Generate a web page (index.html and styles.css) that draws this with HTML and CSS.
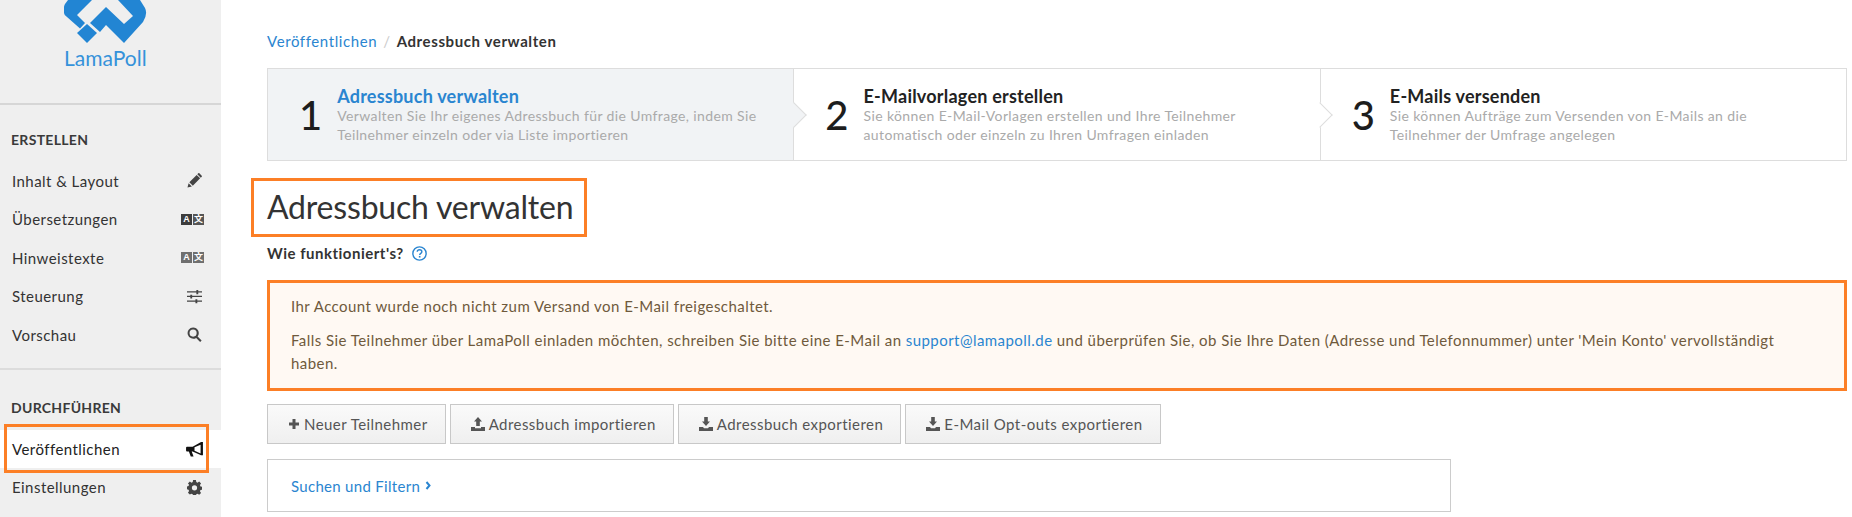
FILE: index.html
```html
<!DOCTYPE html>
<html lang="de">
<head>
<meta charset="utf-8">
<title>Adressbuch verwalten</title>
<link rel="stylesheet" href="styles.css">
</head>
<body>
<aside class="sidebar">
  <div class="brand">
    <svg class="logo" viewBox="0 0 83 43" width="83" height="43" aria-hidden="true">
      <path fill="#2285d3" d="M4 0 L1 4 Q-1 8 0 13 Q0 15 3 17 L16 28.500 L21 23 L13 15 L28 0 Z"/>
      <path fill="#2285d3" d="M13 33 L23 24 L33 33 L23 43 Z"/>
      <path fill="#2285d3" d="M42 7 L26 23 L36 32 L42 25 L60 43 L79 22 Q84 14 81 8 L76 0 L54 0 L69 16 L60 24 Z"/>
    </svg>
    <div class="brand-name">LamaPoll</div>
  </div>
  <nav class="nav-group first">
    <h2 class="nav-title">ERSTELLEN</h2>
    <a class="nav-item">Inhalt &amp; Layout
      <svg class="nav-icon" viewBox="0 0 16 16" aria-hidden="true"><path d="M.5 15.500l1.200-4.700 3.500 3.500zM2.500 9.800l7.800-7.800 3.700 3.700-7.800 7.800zM11 1.300l1-1q.6-.5 1.200 0l2.500 2.500q.5.600 0 1.200l-1 1z"/></svg>
    </a>
    <a class="nav-item">Übersetzungen
      <span class="tr-icon"><span class="tr-box">A</span><span class="tr-box">文</span></span>
    </a>
    <a class="nav-item">Hinweistexte
      <span class="tr-icon muted"><span class="tr-box">A</span><span class="tr-box">文</span></span>
    </a>
    <a class="nav-item">Steuerung
      <svg class="nav-icon" viewBox="0 0 16 16" aria-hidden="true"><path d="M0 2.500h16v1.300H0zM0 7.300h16v1.300H0zM0 12.200h16v1.300H0z"/><path d="M10 1h2v4.500h-2zM3.500 6h2v4.200h-2zM9 10.800h2v4.400H9z"/></svg>
    </a>
    <a class="nav-item">Vorschau
      <svg class="nav-icon" viewBox="0 0 16 16" aria-hidden="true"><path fill-rule="evenodd" d="M6.500.5a6 6 0 0 1 4.800 9.600l4.300 4.200-1.600 1.600-4.200-4.300A6 6 0 1 1 6.500.5zm0 2.200a3.800 3.800 0 1 0 0 7.600 3.800 3.800 0 0 0 0-7.600z"/></svg>
    </a>
  </nav>
  <nav class="nav-group second">
    <h2 class="nav-title">DURCHFÜHREN</h2>
    <a class="nav-item active">Veröffentlichen
      <svg class="nav-icon big" viewBox="0 0 18 16" aria-hidden="true"><path fill-rule="evenodd" d="M16 0h2v14h-2l-9-4H6l2 5.500H5L3 10H1q-1 0-1-1V6q0-1 1-1h6zM15.500 2.800L9 5.600v3.800l6.500 2.800z"/></svg>
    </a>
    <a class="nav-item">Einstellungen
      <svg class="nav-icon" viewBox="0 0 16 16" aria-hidden="true"><path fill-rule="evenodd" d="M6.500 0h3l.4 2.200 1.300.6L13 1.500l2 2.100-1.200 1.800.6 1.400 2.200.4v3l-2.200.4-.6 1.300 1.200 1.900-2 2-1.800-1.200-1.300.5-.4 2.200h-3l-.4-2.200-1.300-.5L3 15.500l-2-2 1.200-1.900-.6-1.300L0 9.800v-3l1.600-.4.600-1.400L1 3.600l2-2.100 1.800 1.300 1.300-.6zM8 5.500a2.800 2.800 0 1 0 0 5.600 2.800 2.800 0 0 0 0-5.600z"/></svg>
    </a>
  </nav>
</aside>
<main class="main">
  <div class="crumbs"><a class="link">Veröffentlichen</a><span class="crumb-sep">/</span><strong>Adressbuch verwalten</strong></div>
  <ol class="steps">
    <li class="step current">
      <span class="step-num">1</span>
      <div><div class="step-title">Adressbuch verwalten</div><p class="step-desc">Verwalten Sie Ihr eigenes Adressbuch für die Umfrage, indem Sie<br>Teilnehmer einzeln oder via Liste importieren</p></div>
    </li>
    <li class="step">
      <span class="step-num">2</span>
      <div><div class="step-title">E-Mailvorlagen erstellen</div><p class="step-desc">Sie können E-Mail-Vorlagen erstellen und Ihre Teilnehmer<br>automatisch oder einzeln zu Ihren Umfragen einladen</p></div>
    </li>
    <li class="step last">
      <span class="step-num">3</span>
      <div><div class="step-title">E-Mails versenden</div><p class="step-desc">Sie können Aufträge zum Versenden von E-Mails an die<br>Teilnehmer der Umfrage angelegen</p></div>
    </li>
  </ol>
  <h1 class="page-title">Adressbuch verwalten</h1>
  <div class="how">Wie funktioniert's?
    <svg class="help" viewBox="0 0 14 14" aria-hidden="true"><circle cx="7" cy="7" r="6.200" fill="none" stroke="#2a85d0" stroke-width="1.300"/><path d="M4.900 5.400Q5 3.500 7 3.500q2.200 0 2.200 1.800c0 1.600-2 1.500-2 3" fill="none" stroke="#2a85d0" stroke-width="1.300"/><rect x="6.400" y="9.300" width="1.500" height="1.500" fill="#2a85d0"/></svg>
  </div>
  <div class="alert">
    <p>Ihr Account wurde noch nicht zum Versand von E-Mail freigeschaltet.</p>
    <p>Falls Sie Teilnehmer über LamaPoll einladen möchten, schreiben Sie bitte eine E-Mail an <a class="link">support@lamapoll.de</a> und überprüfen Sie, ob Sie Ihre Daten (Adresse und Telefonnummer) unter 'Mein Konto' vervollständigt haben.</p>
  </div>
  <div class="actions">
    <button class="btn"><svg class="btn-icon" viewBox="0 0 12 12" aria-hidden="true"><path d="M4.500 1h3v3.500H11v3H7.500V11h-3V7.500H1v-3h3.500z"/></svg>Neuer Teilnehmer</button>
    <button class="btn"><svg class="btn-icon wide" viewBox="0 0 14 14" aria-hidden="true"><path d="M7 0l4 4.500H8.800V9H5.200V4.500H3zM0 10h4v1.200h6V10h4v4H0z"/></svg>Adressbuch importieren</button>
    <button class="btn"><svg class="btn-icon wide" viewBox="0 0 14 14" aria-hidden="true"><path d="M5.200 0h3.600v4.500H11L7 9 3 4.500h2.200zM0 10h4l1 1.200h4L10 10h4v4H0z"/></svg>Adressbuch exportieren</button>
    <button class="btn"><svg class="btn-icon wide" viewBox="0 0 14 14" aria-hidden="true"><path d="M5.200 0h3.600v4.500H11L7 9 3 4.500h2.200zM0 10h4l1 1.200h4L10 10h4v4H0z"/></svg>E-Mail Opt-outs exportieren</button>
  </div>
  <div class="filter-panel"><a class="link">Suchen und Filtern</a>
    <svg class="chev" viewBox="0 0 7 9" aria-hidden="true"><path d="M1.500 1l3 3.500-3 3.500" fill="none" stroke="#2a85d0" stroke-width="2"/></svg>
  </div>
</main>
</body>
</html>
```
FILE: styles.css
```css
*, *::after { box-sizing: border-box; }
html, body { margin: 0; height: 517px; overflow: hidden; }
body { display: flex; background: #fff; color: #333; font: 15px/20px Lato, "Noto Sans", sans-serif; }
p { margin: 0; }

.sidebar { width: 221px; flex: none; height: 517px; background: #efefef; }
.brand { height: 105px; border-bottom: 2px solid #d6d6d6; padding-left: 64px; }
.logo { display: block; }
.brand-name { margin-top: 1px; width: 83px; font-size: 21px; line-height: 27px; color: #3592da; white-space: nowrap; }
.nav-group.first { height: 265px; border-bottom: 2px solid #dcdcdc; padding-top: 25px; }
.nav-group.second { padding-top: 28px; }
.nav-title { margin: 0 0 12px; padding-left: 11px; font-size: 14px; line-height: 20px; font-weight: 700; color: #3a3a3a; letter-spacing: .3px; }
.first .nav-title { margin-bottom: 11.500px; }
.nav-item { position: relative; display: flex; justify-content: space-between; align-items: center; height: 38.500px; padding: 0 19px 0 12px; font-size: 15px; letter-spacing: .45px; color: #333; }
.nav-item.active { height: 38px; background: #fff; color: #222; }
.nav-item.active::after { content: ""; position: absolute; left: 4px; top: -6px; width: 205px; height: 49px; border: 3px solid #fc7f26; }
.nav-icon { width: 15px; height: 15px; fill: #444; }
.nav-icon.big { width: 17px; height: 15px; fill: #111; margin-right: -1px; }
.tr-icon { display: flex; gap: 1px; margin-right: -2px; }
.tr-box { width: 11px; height: 11px; background: #3c3c3c; color: #fff; font: 700 9px/11px "Liberation Sans", "Noto Sans CJK SC", sans-serif; letter-spacing: 0; text-align: center; overflow: hidden; }
.tr-box + .tr-box { background: #555; }
.tr-icon.muted .tr-box { background: #6f6f6f; }

.main { flex: 1; min-width: 0; padding: 31px 5px 0 46px; }
.link { color: #2a85d0; }
.crumbs { letter-spacing: .6px; line-height: 20px; }
.crumbs strong { font-weight: 700; color: #333; }
.crumb-sep { margin: 0 6px; color: #ccc; }

.steps { display: flex; margin: 17px 0 0; padding: 0; list-style: none; height: 93px; border: 1px solid #ddd; }
.step { position: relative; flex: 1; display: flex; align-items: center; gap: 15px; padding-left: 31px; border-right: 1px solid #ddd; background: #fff; }
.step.current { background: #f1f3f5; }
.step.last { border-right: 0; }
.step:not(.last)::after { content: ""; position: absolute; z-index: 1; right: -9.500px; top: 36.500px; width: 18px; height: 18px; background: inherit; border-top: 1px solid #ddd; border-right: 1px solid #ddd; transform: rotate(45deg); }
.step-num { font-size: 40px; line-height: 40px; color: #1d1d1d; font-weight: 500; }
.step-title { font-size: 18px; line-height: 20px; font-weight: 700; letter-spacing: .22px; color: #222; }
.current .step-title { color: #2a85d0; }
.step-desc { font-size: 14px; line-height: 19px; color: #aaa; letter-spacing: .38px; }

.page-title { display: inline-block; margin: 17px 0 0 -16px; padding: 0 11px 0 13px; height: 59px; border: 3px solid #fc7f26; font-size: 32px; line-height: 52px; font-weight: 400; letter-spacing: -.2px; color: #333; white-space: nowrap; vertical-align: top; }
.how { margin-top: 6px; margin-bottom: 17px; font-weight: 700; letter-spacing: .5px; line-height: 20px; display: flex; align-items: center; gap: 8px; color: #333; }
.help { width: 15px; height: 15px; }
.alert { height: 111px; padding: 12px 21px; border: 3px solid #fc7f26; background: #fff9f3; color: #6f5a3c; letter-spacing: .45px; line-height: 22.500px; }
.alert p + p { margin-top: 11.500px; }
.actions { display: flex; gap: 4px; margin-top: 13px; }
.btn { display: flex; align-items: center; justify-content: center; gap: 4px; height: 40px; padding: 0 17px 0 20px; border: 1px solid #c8c8c8; background: linear-gradient(#fafafa, #efefef); color: #555; font: 15px Lato, sans-serif; letter-spacing: .45px; }
.btn-icon { width: 12px; height: 12px; fill: #555; }
.btn-icon.wide { width: 14px; height: 14px; }
.filter-panel { width: 1184px; height: 53px; margin-top: 15px; border: 1px solid #ccc; padding: 0 23px; letter-spacing: .3px; display: flex; align-items: center; gap: 5px; }
.chev { width: 7px; height: 9px; }
```
